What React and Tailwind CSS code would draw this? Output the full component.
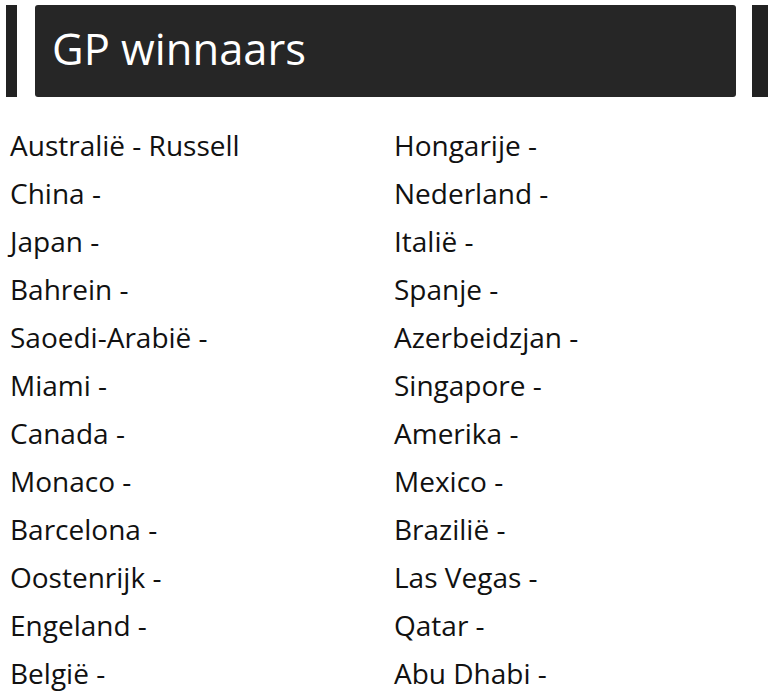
import React from "react";

const left = ["Australië - Russell","China -","Japan -","Bahrein -","Saoedi-Arabië -","Miami -","Canada -","Monaco -","Barcelona -","Oostenrijk -","Engeland -","België -"];
const right = ["Hongarije -","Nederland -","Italië -","Spanje -","Azerbeidzjan -","Singapore -","Amerika -","Mexico -","Brazilië -","Las Vegas -","Qatar -","Abu Dhabi -"];

export default function App() {
  return (
    <div className="w-[768px] h-[693px] overflow-hidden bg-white" style={{ fontFamily: '"Open Sans", sans-serif' }}>
      <div className="flex h-[92px] mt-[5px] pl-[6px]">
        <div className="w-[11px] bg-[#222222]" />
        <div className="ml-[18px] w-[701px] bg-[#262626] rounded-[3px] flex items-center pl-[17px] pb-[4px]">
          <span className="text-white text-[43.5px] leading-none">GP winnaars</span>
        </div>
        <div className="ml-[16px] flex-1 bg-[#222222]" />
      </div>
      <div className="grid grid-cols-[384px_1fr] pl-[10px] pt-[24px]">
        <div className="flex flex-col">
          {left.map((t) => (
            <div key={t} className="h-[48px] flex items-center text-[28px] text-[#111]">{t}</div>
          ))}
        </div>
        <div className="flex flex-col">
          {right.map((t) => (
            <div key={t} className="h-[48px] flex items-center text-[28px] text-[#111]">{t}</div>
          ))}
        </div>
      </div>
    </div>
  );
}
